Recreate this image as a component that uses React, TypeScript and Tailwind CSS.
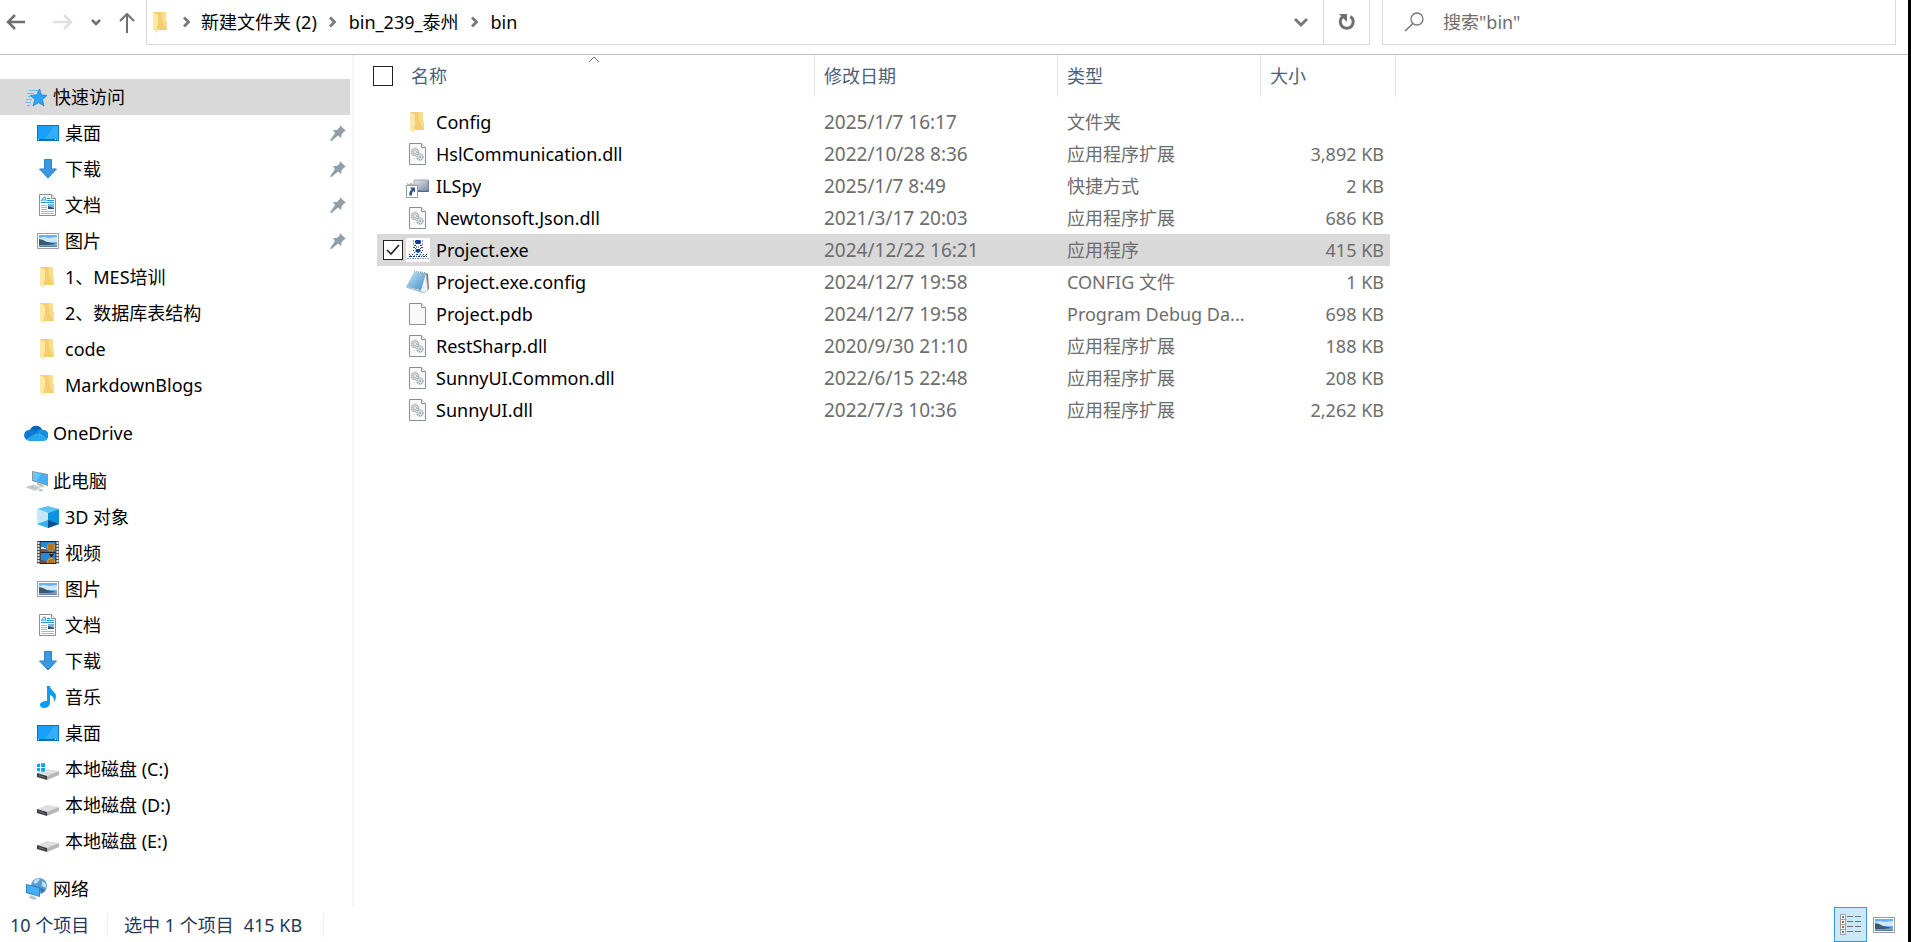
import { useState } from 'react';
import type { ReactNode } from 'react';

interface IconProps {
  className?: string;
}

interface NavItem {
  label: string;
  icon: ReactNode;
  pinned?: boolean;
}

interface NavGroup extends NavItem {
  children: NavItem[];
}

interface FileRow {
  name: string;
  icon: ReactNode;
  date: string;
  type: string;
  size: string;
}

/* ---------- Icons, all on a 24px grid ---------- */

const FolderIcon = () => (
  <svg className="size-6 shrink-0" viewBox="0 0 24 24">
    <path d="M4 2h12l1 1v8l1 1v8H8l-4-1z" fill="#f3cf72" />
    <path d="M12 2h4l1 1v8l1 1v8l-4-7z" fill="#f9dc8e" />
    <path d="M4 2l5 3v9l-1 2v7l-4-3z" fill="#ffe7a6" />
  </svg>
);

const StarIcon = () => (
  <svg className="size-6 shrink-0" viewBox="0 0 24 24">
    <path d="M5 5.500h9M3 8.500h7M4 11.500h4M2 14.500h6M1 17.500h6M3 20.500h3" stroke="#6dbdf2" strokeWidth="1" />
    <path
      d="M15.500 4l2 6 5.500.5-4.500 4 1.500 6.500-5.500-3.500-5.500 3.500 2-6.500-4.500-4 6-.5z"
      fill="#2aa5f5"
      stroke="#1380cb"
      strokeWidth=".7"
      strokeLinejoin="round"
    />
  </svg>
);

const DesktopIcon = () => (
  <svg className="size-6 shrink-0" viewBox="0 0 24 24">
    <rect x="1.500" y="4.500" width="21" height="15" fill="#18a0fb" stroke="#0a74c4" />
    <path d="M9 18L18 5h4v13z" fill="#35adfc" />
    <path d="M2 18.500h20" stroke="#0b5fa5" />
    <path d="M2 18.500h1M19 18.500h1M21 18.500h1" stroke="#fff" />
  </svg>
);

const DownloadIcon = () => (
  <svg className="size-6 shrink-0" viewBox="0 0 24 24">
    <path d="M8.500 2.500h7v9.500h5L12 21 3.500 12h5z" fill="#3b97e0" stroke="#2b83cc" />
  </svg>
);

const DocumentIcon = () => (
  <svg className="size-6 shrink-0" viewBox="0 0 24 24">
    <path d="M3.500 1.500h12l4 4v17h-16z" fill="#fff" stroke="#8b8f92" />
    <path d="M15.500 1.500v4h4" fill="#f1f1f1" stroke="#8b8f92" />
    <path d="M5 8l3-4h1l1 4M6 7h3" fill="none" stroke="#2892dc" />
    <path d="M11 5.500h3M11 7.500h7M5 9.500h13" stroke="#2892dc" />
    <path d="M5 12.500h6M5 14.500h6M5 16.500h6M5 18.500h13M5 20.500h13" stroke="#b5b8ba" />
    <rect x="12" y="11" width="6" height="5" fill="#7fb4e0" />
    <path d="M12 13l3 1 3 1v1h-6z" fill="#31506e" />
  </svg>
);

const PictureIcon = () => (
  <svg className="size-6 shrink-0" viewBox="0 0 24 24">
    <rect x="1.500" y="4.500" width="21" height="15" fill="#fff" stroke="#9b9fa3" />
    <rect x="3" y="6" width="18" height="12" fill="#66b2f8" />
    <path d="M3 9l5-1 5 1 8-1v5H3z" fill="#cfe7f7" />
    <path d="M3 14h18v4H3z" fill="#7fa3c6" />
    <path d="M3 10l4 1 4 2 5 1 4 1-8 1H3z" fill="#3c586c" />
    <path d="M3 17.500h18" stroke="#5580ac" />
  </svg>
);

const CloudIcon = () => (
  <svg className="size-6 shrink-0" viewBox="0 0 24 24">
    <path d="M6 9a6.500 6.500 0 0 1 12-.5L14 14z" fill="#0364b8" />
    <path d="M5.500 9C8 8 10 9 12 10l3 3-12 6A5.300 5.300 0 0 1 5.500 9z" fill="#0f78d4" />
    <path d="M12.500 11c2-2.500 4-2.800 6-2.200A5.500 5.500 0 0 1 23 18z" fill="#1490df" />
    <path d="M2 18l11-6 10.500 5.500c-1 1.800-2 2.500-4 2.500H5.500C4 20 3 19.300 2 18z" fill="#28a8ea" />
  </svg>
);

const ComputerIcon = () => (
  <svg className="size-6 shrink-0" viewBox="0 0 24 24">
    <path d="M8 2l16 3v12L8 12z" fill="#8d979e" />
    <path d="M9 3l14 3v9.500L9 11z" fill="#43b0f8" />
    <path d="M9 3l8 2-4 7-4-1z" fill="#69c3fb" />
    <path d="M13 14l5 1.500 3 3-4-1-4-2z" fill="#b4bbc0" />
    <path d="M1 18l9-2.500 8 3-7 3.500z" fill="#d3d8db" />
    <path d="M3 18.500l7-2M5 19.500l7-2M8 20.500l6-2" stroke="#a3abb0" strokeWidth=".6" />
    <path d="M14 21l4-1 1 1.500-3 1z" fill="#b4bbc0" />
  </svg>
);

const CubeIcon = () => (
  <svg className="size-6 shrink-0" viewBox="0 0 24 24">
    <path d="M12 1l11 3-11 4L1 4z" fill="#5bc3f5" />
    <path d="M1 4l11 4v15L1 19z" fill="#c4e6f5" />
    <path d="M23 4L12 8v15l11-4z" fill="#0a94dd" />
    <path d="M1 19l11-4v8z" fill="#39b0ec" />
    <path d="M12 15l11 4-11 4z" fill="#0b4f93" />
  </svg>
);

const VideoIcon = () => (
  <svg className="size-6 shrink-0" viewBox="0 0 24 24">
    <rect x="1" y="0" width="22" height="23" fill="#4a4a4a" />
    <path d="M2.500 1v22M21.500 1v22" stroke="#e8e8e8" strokeWidth="2" strokeDasharray="2 1" />
    <path d="M5 1h14v10H5zM5 12h14v10H5z" fill="#2f86cf" />
    <path d="M5 8l5 1 4 2H5zM5 19l5 1 4 2H5z" fill="#7f4b3b" />
    <path d="M5 6h3v1h2v1H5z" fill="#dfe9ee" />
    <circle cx="15" cy="6" r="4" fill="#e39a2d" />
    <path d="M13 3v6M15 2v8M17 3v6" stroke="#6b3f14" strokeWidth=".8" />
    <path d="M13 13h5l-2 3h-1z" fill="#27211d" />
    <path d="M11 22a4 4 0 0 1 8-2v2z" fill="#e39a2d" />
    <path d="M13 19v3M15 18v4M17 18v4" stroke="#6b3f14" strokeWidth=".8" />
    <path d="M4 11.500h16M4 22.500h16M4 .5h16" stroke="#222" />
  </svg>
);

const MusicIcon = () => (
  <svg className="size-6 shrink-0" viewBox="0 0 24 24">
    <path
      d="M11 1h3c0 4 6 6 6 10 0 3-1 4-2 6 0-4-1-6-4-7v8c0 3-3 5-6 5-2.500 0-4-1.500-4-3 0-2.500 3-4 7-4z"
      fill="#0c9cf2"
    />
  </svg>
);

const DiskIcon = ({ system = false }: { system?: boolean }) => (
  <svg className="size-6 shrink-0" viewBox="0 0 24 24">
    <path d="M1 16l10-4 12 2-12 5z" fill="#dcdee0" />
    <path d="M1 16l10 3v4L1 20z" fill="#3b3d40" />
    <path d="M23 14l-12 5v4l12-5z" fill="#b4b6b9" />
    <path d="M3 18.500l6 2" stroke="#74787c" />
    {system && <path d="M0 5h10v10H0z" fill="#fff" />}
    {system && <path d="M1 7l3-.5V10H1zM5 6.400L9 6v4H5zM1 11h3v3.500L1 14zM5 11h4v4l-4-.5z" fill="#0ea5f2" />}
  </svg>
);

const NetworkIcon = () => (
  <svg className="size-6 shrink-0" viewBox="0 0 24 24">
    <circle cx="15" cy="9" r="8" fill="#5c9dd0" />
    <path d="M9 5c2-3 5-4 7-3l-2 3-3 2zM18 4l4 3v4l-4-2z" fill="#bfe0f2" />
    <path d="M15 10l6 3-3 3z" fill="#3872a8" />
    <path d="M2 7l14 3v10L2 16z" fill="#2f7fc2" />
    <path d="M3 8l12 3v8L3 15z" fill="#3fb0f9" />
    <path d="M6 18l6 2 1 2-3 1-5-2z" fill="#c1c7cb" />
  </svg>
);

const DllIcon = () => (
  <svg className="size-6 shrink-0" viewBox="0 0 24 24">
    <path d="M3.500 1.500h12l4 4v17h-16z" fill="#f9fafa" stroke="#8b8f92" />
    <path d="M15.500 1.500v4h4" fill="#fff" stroke="#8b8f92" />
    <circle cx="9" cy="10" r="3.500" fill="#e3e5e6" stroke="#9a9fa2" strokeWidth="1.500" strokeDasharray="1.300 .9" />
    <circle cx="9" cy="10" r="1.500" fill="#fff" stroke="#9a9fa2" strokeWidth=".8" />
    <circle cx="14" cy="15" r="3" fill="#e3e8ea" stroke="#98a3a7" strokeWidth="1.500" strokeDasharray="1.300 .9" />
    <circle cx="14" cy="15" r="1" fill="#fff" stroke="#98a3a7" strokeWidth=".8" />
  </svg>
);

const BlankFileIcon = () => (
  <svg className="size-6 shrink-0" viewBox="0 0 24 24">
    <path d="M3.500 1.500h12l4 4v17h-16z" fill="#f8f8f8" stroke="#8b8f92" />
    <path d="M15.500 1.500v4h4" fill="#fff" stroke="#8b8f92" />
  </svg>
);

const ShortcutIcon = () => (
  <svg className="size-6 shrink-0" viewBox="0 0 24 24">
    <defs>
      <linearGradient id="screen" x1="0" y1="0" x2="1" y2="1">
        <stop offset="0" stopColor="#e8edf1" />
        <stop offset="1" stopColor="#7f90a1" />
      </linearGradient>
    </defs>
    <rect x="8" y="6" width="15" height="12" rx="1" fill="#4d6aa0" />
    <rect x="8" y="6" width="14" height="10" rx="1" fill="url(#screen)" stroke="#9aa5ae" />
    <path d="M1 9h1v1h2V9h2v1h2v2H1z" fill="#b4bbc0" />
    <rect x=".5" y="11.500" width="11" height="12" fill="#fff" stroke="#9aa0a5" />
    <path d="M4 13.500h5v5l-1.500-1.500c-1.500 1-1.500 2.500-1.500 4.500H3.500c-.5-3 0-4.500 2-6z" fill="#34508f" />
  </svg>
);

const ProjectExeIcon = () => (
  <svg className="size-6 shrink-0" viewBox="0 0 24 24">
    <path d="M0 0h24v24H0z" fill="#fff" />
    <path d="M10 2h4l1 1v2l-1 1h-4L9 5V3z" fill="#0c3f95" />
    <path d="M10 11h4v1l1 1-1 1-2 1-2-1-1-1 1-1z" fill="#0c3f95" />
    <path
      d="M7 3h1M16 3h1M7 6h1M16 6h1M8 7.500h2M14 7.500h2M7 9.500h2M15 9.500h2M9 10.500h1M14 10.500h1M7 12.500h1M16 12.500h1M8 14.500h1M15 14.500h1"
      stroke="#0c3f95"
    />
    <path d="M10 8.500h4M10 9.500h4" stroke="#7d99c9" strokeDasharray="1 1" />
    <path d="M3 16.500h1M6 16.500h1M10 16.500h2M14 16.500h1M17 16.500h1M20 16.500h1" stroke="#0c3f95" />
    <path d="M3 18.500h3M7 18.500h2M10 18.500h1M12 18.500h2M15 18.500h1M17 18.500h2M20 18.500h1" stroke="#0c3f95" />
    <path d="M4 17.500h1M8 17.500h1M13 17.500h1M16 17.500h1M19 17.500h1" stroke="#5e81bd" />
    <path d="M1 20.500h22" stroke="#7d99c9" strokeDasharray="2 1 1 1" />
  </svg>
);

const NotepadIcon = () => (
  <svg className="size-6 shrink-0" viewBox="0 0 24 24">
    <defs>
      <linearGradient id="cover" x1="0" y1="0" x2="1" y2="1">
        <stop offset="0" stopColor="#c8e9f7" />
        <stop offset="1" stopColor="#3d8fcb" />
      </linearGradient>
    </defs>
    <path d="M20 3l2 1 1 15-3 2z" fill="#8c6d68" />
    <path d="M20 3l2 17-4 3-5-2z" fill="#eef2f4" stroke="#9aa7af" strokeWidth=".7" />
    <path d="M8 2l12 1-5 17L0 17z" fill="url(#cover)" />
    <path d="M8 1.500l12 1.500" stroke="#8d9ba3" strokeWidth="1.500" strokeDasharray="1 1" />
    <path d="M0 17l15 3.500 1 2L1 18z" fill="#9fb4c2" />
  </svg>
);

const PinIcon = ({ className }: IconProps) => (
  <svg className={className} viewBox="0 0 16 16">
    <path d="M10 0l6 6-2 .5-2.500 3L11 13 8 10.500 1.500 16 0 15.500 5 8 3 5l4 0 3-3z" fill="#8f9ea8" />
  </svg>
);

const ChevronRight = () => (
  <svg className="size-3 shrink-0" viewBox="0 0 12 12">
    <path d="M3 1.500L7.500 6 3 10.500" fill="none" stroke="#7a7a7a" strokeWidth="2.800" />
  </svg>
);

/* ---------- Data ---------- */

const navGroups: NavGroup[] = [
  {
    label: '快速访问',
    icon: <StarIcon />,
    children: [
      { label: '桌面', icon: <DesktopIcon />, pinned: true },
      { label: '下载', icon: <DownloadIcon />, pinned: true },
      { label: '文档', icon: <DocumentIcon />, pinned: true },
      { label: '图片', icon: <PictureIcon />, pinned: true },
      { label: '1、MES培训', icon: <FolderIcon /> },
      { label: '2、数据库表结构', icon: <FolderIcon /> },
      { label: 'code', icon: <FolderIcon /> },
      { label: 'MarkdownBlogs', icon: <FolderIcon /> },
    ],
  },
  { label: 'OneDrive', icon: <CloudIcon />, children: [] },
  {
    label: '此电脑',
    icon: <ComputerIcon />,
    children: [
      { label: '3D 对象', icon: <CubeIcon /> },
      { label: '视频', icon: <VideoIcon /> },
      { label: '图片', icon: <PictureIcon /> },
      { label: '文档', icon: <DocumentIcon /> },
      { label: '下载', icon: <DownloadIcon /> },
      { label: '音乐', icon: <MusicIcon /> },
      { label: '桌面', icon: <DesktopIcon /> },
      { label: '本地磁盘 (C:)', icon: <DiskIcon system /> },
      { label: '本地磁盘 (D:)', icon: <DiskIcon /> },
      { label: '本地磁盘 (E:)', icon: <DiskIcon /> },
    ],
  },
  { label: '网络', icon: <NetworkIcon />, children: [] },
];

const files: FileRow[] = [
  { name: 'Config', icon: <FolderIcon />, date: '2025/1/7 16:17', type: '文件夹', size: '' },
  { name: 'HslCommunication.dll', icon: <DllIcon />, date: '2022/10/28 8:36', type: '应用程序扩展', size: '3,892 KB' },
  { name: 'ILSpy', icon: <ShortcutIcon />, date: '2025/1/7 8:49', type: '快捷方式', size: '2 KB' },
  { name: 'Newtonsoft.Json.dll', icon: <DllIcon />, date: '2021/3/17 20:03', type: '应用程序扩展', size: '686 KB' },
  { name: 'Project.exe', icon: <ProjectExeIcon />, date: '2024/12/22 16:21', type: '应用程序', size: '415 KB' },
  { name: 'Project.exe.config', icon: <NotepadIcon />, date: '2024/12/7 19:58', type: 'CONFIG 文件', size: '1 KB' },
  { name: 'Project.pdb', icon: <BlankFileIcon />, date: '2024/12/7 19:58', type: 'Program Debug Da...', size: '698 KB' },
  { name: 'RestSharp.dll', icon: <DllIcon />, date: '2020/9/30 21:10', type: '应用程序扩展', size: '188 KB' },
  { name: 'SunnyUI.Common.dll', icon: <DllIcon />, date: '2022/6/15 22:48', type: '应用程序扩展', size: '208 KB' },
  { name: 'SunnyUI.dll', icon: <DllIcon />, date: '2022/7/3 10:36', type: '应用程序扩展', size: '2,262 KB' },
];

const crumbs = ['新建文件夹 (2)', 'bin_239_泰州', 'bin'];

/* ---------- Parts ---------- */

function Toolbar() {
  return (
    <header className="flex h-[55px] shrink-0 items-start border-b border-[#bdbdbd]">
      <div className="flex h-11 w-[146px] shrink-0 items-center text-[#6e7070]">
        <button type="button" aria-label="后退" className="ml-1.5">
          <svg className="size-6" viewBox="0 0 24 24">
            <path d="M19 12H3M9 5l-7 7 7 7" fill="none" stroke="currentColor" strokeWidth="2.500" />
          </svg>
        </button>
        <button type="button" aria-label="前进" className="ml-5 text-[#dfe0e1]">
          <svg className="size-6" viewBox="0 0 24 24">
            <path d="M3 12h18M14 5l7 7-7 7" fill="none" stroke="currentColor" strokeWidth="2.500" />
          </svg>
        </button>
        <button type="button" aria-label="最近浏览的位置" className="ml-4">
          <svg className="size-3" viewBox="0 0 12 12">
            <path d="M2 4l4 4 4-4" fill="none" stroke="currentColor" strokeWidth="2.500" />
          </svg>
        </button>
        <button type="button" aria-label="上移" className="ml-[13px]">
          <svg className="size-6" viewBox="0 0 24 24">
            <path d="M12 23V4M5 11l7-7 7 7" fill="none" stroke="currentColor" strokeWidth="2" />
          </svg>
        </button>
      </div>

      <div className="flex h-[45px] min-w-0 flex-1 border-x border-b border-[#d9d9d9]">
        <div className="flex h-[43px] min-w-0 flex-1 items-center pl-0.5">
          <FolderIcon />
          {crumbs.map((crumb, i) => (
            <div key={crumb} className="flex items-center whitespace-nowrap">
              <span className={`flex justify-center ${i === 0 ? 'w-7' : 'w-8'}`}>
                <ChevronRight />
              </span>
              <a href="#" className="text-black">
                {crumb}
              </a>
            </div>
          ))}
        </div>
        <button type="button" aria-label="以前的位置" className="flex w-11 items-center justify-center">
          <svg className="size-4" viewBox="0 0 16 16">
            <path d="M2 5l6 6 6-6" fill="none" stroke="#7a7a7a" strokeWidth="3" />
          </svg>
        </button>
        <button
          type="button"
          aria-label="刷新"
          className="flex w-[46px] items-center justify-center border-l border-[#d9d9d9]"
        >
          <svg className="size-5" viewBox="0 0 20 20">
            <path d="M13.500 4.500a6.500 6.500 0 1 1-7.500 0" fill="none" stroke="#6e7070" strokeWidth="3" />
            <path d="M2 2h8v8z" fill="#6e7070" />
          </svg>
        </button>
      </div>

      <label className="ml-3 mr-3 flex h-[45px] w-[514px] items-center border-x border-b border-[#d9d9d9] pl-5">
        <svg className="size-6 shrink-0" viewBox="0 0 24 24">
          <circle cx="14" cy="9" r="6" fill="none" stroke="#757575" strokeWidth="1.300" />
          <path d="M10 13.500L2 21" stroke="#757575" strokeWidth="1.500" />
        </svg>
        <input
          type="text"
          aria-label="搜索"
          placeholder={'搜索"bin"'}
          className="ml-4 min-w-0 flex-1 bg-transparent outline-none placeholder:text-[#6d6d6d]"
        />
      </label>
    </header>
  );
}

function Sidebar() {
  const [current, setCurrent] = useState('快速访问');

  return (
    <nav className="flex w-[354px] shrink-0 flex-col gap-3 border-r-2 border-[#f5f5f5] pr-0.5 pt-6">
      {navGroups.map((group) => (
        <div key={group.label}>
          <button
            type="button"
            onClick={() => setCurrent(group.label)}
            className={`flex h-9 w-full items-center gap-[5px] pl-6 ${current === group.label ? 'bg-[#d9d9d9]' : ''}`}
          >
            {group.icon}
            <span>{group.label}</span>
          </button>
          {group.children.map((item) => (
            <a key={item.label} href="#" className="flex h-9 items-center gap-[5px] pl-9 pr-1">
              {item.icon}
              <span className="flex-1">{item.label}</span>
              {item.pinned && <PinIcon className="size-4" />}
            </a>
          ))}
        </div>
      ))}
    </nav>
  );
}

function CheckBox({ checked, label, onChange }: { checked: boolean; label: string; onChange: () => void }) {
  return (
    <span className="relative block size-5 shrink-0">
      <input
        type="checkbox"
        aria-label={label}
        checked={checked}
        onChange={onChange}
        className="block size-5 appearance-none border border-[#222] bg-white"
      />
      {checked && (
        <svg className="pointer-events-none absolute inset-0 size-5" viewBox="0 0 20 20">
          <path d="M4 10l4 4 8-9" fill="none" stroke="#222" strokeWidth="1.600" />
        </svg>
      )}
    </span>
  );
}

function FileTable({ selected, onSelect }: { selected: string[]; onSelect: (names: string[]) => void }) {
  const toggle = (name: string) =>
    onSelect(selected.includes(name) ? selected.filter((n) => n !== name) : [...selected, name]);
  const allSelected = selected.length === files.length;

  return (
    <table className="w-[1042px] table-fixed border-collapse self-start text-left text-[#6d6d6d]">
      <colgroup>
        <col className="w-[461px]" />
        <col className="w-[243px]" />
        <col className="w-[203px]" />
        <col className="w-[135px]" />
      </colgroup>
      <thead className="text-[#4c607a]">
        <tr>
          <th className="p-0 pb-[9px] font-normal">
            <div className="relative ml-[19px] flex h-[42px] items-center gap-[18px] border-r border-[#e5e5e5]">
              <CheckBox
                label="全选"
                checked={allSelected}
                onChange={() => onSelect(allSelected ? [] : files.map((f) => f.name))}
              />
              <span>名称</span>
              <svg className="absolute inset-x-0 top-0 mx-auto h-2 w-3" viewBox="0 0 12 8">
                <path d="M1 7l5-5 5 5" fill="none" stroke="#6d6d6d" />
              </svg>
            </div>
          </th>
          {['修改日期', '类型', '大小'].map((title) => (
            <th key={title} className="p-0 pb-[9px] font-normal">
              <div className="flex h-[42px] items-center border-r border-[#e5e5e5] pl-[9px]">{title}</div>
            </th>
          ))}
        </tr>
      </thead>
      <tbody>
        {files.map((file) => {
          const active = selected.includes(file.name);
          const fill = active ? 'bg-[#d9d9d9]' : 'group-hover:bg-[#f0f0f0]';
          return (
            <tr key={file.name} className="group">
              <td className="p-0">
                <div className={`ml-[23px] flex h-8 items-center pl-1.5 text-black ${fill}`}>
                  <span className={active ? '' : 'opacity-0 group-hover:opacity-100'}>
                    <CheckBox label={file.name} checked={active} onChange={() => toggle(file.name)} />
                  </span>
                  <span className="ml-[3px] mr-1.5">{file.icon}</span>
                  <span className="truncate">{file.name}</span>
                </div>
              </td>
              <td className="p-0">
                <div className={`h-8 truncate pl-[9px] text-[19px] leading-8 ${fill}`}>{file.date}</div>
              </td>
              <td className="p-0">
                <div className={`h-8 truncate pl-[9px] pr-2 leading-8 ${fill}`}>{file.type}</div>
              </td>
              <td className="p-0">
                <div className={`mr-1.5 h-8 pr-1.5 text-right leading-8 ${fill}`}>{file.size}</div>
              </td>
            </tr>
          );
        })}
      </tbody>
    </table>
  );
}

function StatusBar({ selectedCount }: { selectedCount: number }) {
  return (
    <footer className="flex h-[35px] shrink-0 items-center pr-3 text-[#1e395b]">
      <span className="w-[108px] border-r border-[#ededed] pl-2.5">{files.length} 个项目</span>
      {selectedCount > 0 && (
        <span className="flex w-[216px] gap-2.5 whitespace-nowrap border-r border-[#ededed] pl-4">
          <span>选中 {selectedCount} 个项目</span>
          <span>415 KB</span>
        </span>
      )}
      <div className="ml-auto flex h-full items-center gap-[5px]">
        <button
          type="button"
          aria-label="详细信息"
          className="flex h-full w-[33px] items-center justify-center border border-[#3399dd] bg-[#cbe8f6]"
        >
          <svg className="h-[21px] w-[21px]" viewBox="0 0 21 21">
            <path d="M.5.5h5v20h-5zM.5 5.500h5M.5 10.500h5M.5 15.500h5" fill="#fff" stroke="#9b9fa3" />
            <path d="M2 3h2M2 18h2" stroke="#4b7bab" strokeWidth="2" />
            <path d="M2 8h2M2 13h2" stroke="#c4602b" strokeWidth="2" />
            <path d="M7 2.500h6M15 2.500h6M7 7.500h6M15 7.500h6M7 12.500h6M15 12.500h6M7 17.500h6M15 17.500h6" stroke="#6c7174" />
          </svg>
        </button>
        <button type="button" aria-label="大图标">
          <PictureIcon />
        </button>
      </div>
    </footer>
  );
}

export default function App() {
  const [selected, setSelected] = useState<string[]>(['Project.exe']);

  return (
    <div className="flex min-h-screen flex-col border-r-[3px] border-black bg-white font-['Noto_Sans','Noto_Sans_CJK_SC',sans-serif] text-lg leading-6 text-black">
      <Toolbar />
      <main className="flex flex-1">
        <Sidebar />
        <FileTable selected={selected} onSelect={setSelected} />
      </main>
      <StatusBar selectedCount={selected.length} />
    </div>
  );
}
